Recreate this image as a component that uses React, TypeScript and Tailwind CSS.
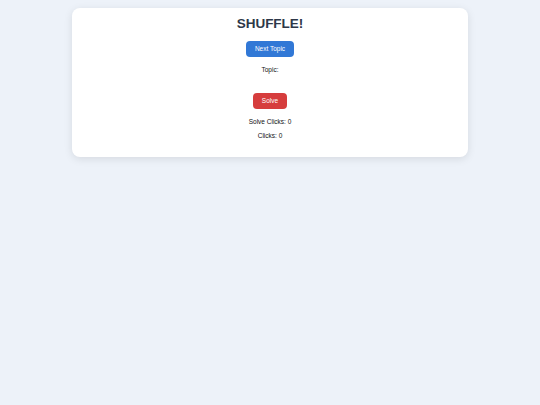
import React from "react";

export default function App() {
  return (
    <div className="min-h-[405px] w-full bg-[#edf2f9] pt-2" style={{ fontFamily: '"Liberation Sans", Arial, sans-serif' }}>
      <div className="mx-auto flex w-[396px] flex-col items-center rounded-[8px] bg-white pt-[8px] pb-[17px] shadow-[0_2px_8px_rgba(0,0,0,0.1)]">
        <h1 className="text-[13.5px] font-bold leading-[16px] text-[#2d3748]">SHUFFLE!</h1>
        <button className="mt-[9px] h-[16px] w-[48px] rounded-[4px] bg-[#3178d6] text-[6.5px] leading-[16px] text-white">
          Next Topic
        </button>
        <p className="mt-[9px] text-[6.5px] leading-[8px] text-[#111]">Topic:</p>
        <div className="h-[11px]" />
        <button className="mt-[8px] h-[16px] w-[34px] rounded-[4px] bg-[#d63d3d] text-[6.5px] leading-[16px] text-white">
          Solve
        </button>
        <p className="mt-[9px] text-[6.5px] leading-[8px] text-[#111]">Solve Clicks: 0</p>
        <p className="mt-[6px] text-[6.5px] leading-[8px] text-[#111]">Clicks: 0</p>
      </div>
    </div>
  );
}
